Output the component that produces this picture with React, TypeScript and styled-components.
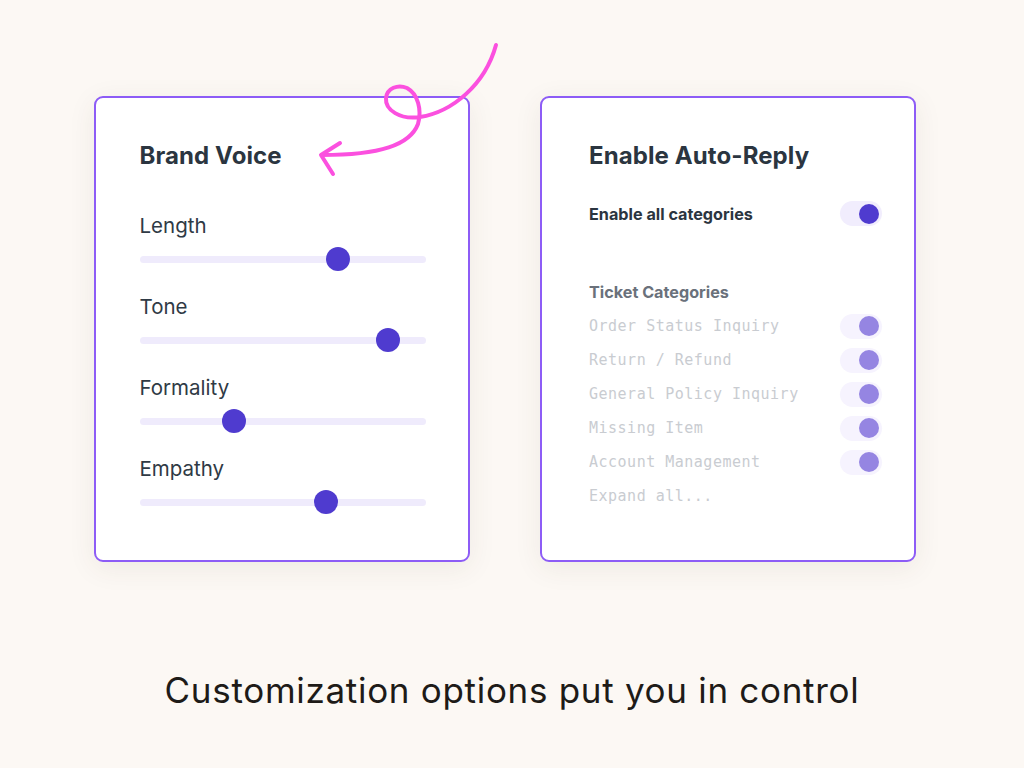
import styled, { createGlobalStyle } from 'styled-components';

const GlobalStyle = createGlobalStyle`
  html, body {
    margin: 0;
    padding: 0;
    background: #fcf8f4;
  }
  * {
    box-sizing: border-box;
  }
`;

// thumb centre, px from the left end of the track
const sliders = [
  { label: 'Length', value: 198 },
  { label: 'Tone', value: 248 },
  { label: 'Formality', value: 94 },
  { label: 'Empathy', value: 186 },
];

const categories = [
  'Order Status Inquiry',
  'Return / Refund',
  'General Policy Inquiry',
  'Missing Item',
  'Account Management',
];

const Page = styled.div`
  position: relative;
  width: 1024px;
  height: 768px;
  display: flex;
  flex-direction: column;
  font-family: Inter, 'Noto Sans', sans-serif;
`;

const CardsRow = styled.div`
  display: flex;
  gap: 70px;
  padding: 96px 0 0 94px;
`;

const Card = styled.div`
  width: 376px;
  height: 466px;
  background: #ffffff;
  border: 2.5px solid #8d5cf6;
  border-radius: 9px;
  box-shadow: 0 6px 28px rgba(80, 60, 40, 0.08);
  display: flex;
  flex-direction: column;
`;

const VoiceCard = styled(Card)`
  padding: 44px 42px 0 43.5px;
`;

const ReplyCard = styled(Card)`
  padding: 44px 32px 0 47px;
`;

const Title = styled.h2`
  margin: 0;
  font-size: 24px;
  line-height: 28px;
  font-weight: 700;
  color: #2b3540;
  letter-spacing: 0.1px;
`;

const SliderList = styled.div`
  margin-top: 44px;
  display: flex;
  flex-direction: column;
  gap: 24px;
`;

const SliderGroup = styled.div`
  display: flex;
  flex-direction: column;
  gap: 9px;
`;

const SliderLabel = styled.div`
  font-size: 20.5px;
  line-height: 24px;
  color: #2f3a45;
  font-weight: 400;
`;

const SliderRow = styled.div`
  position: relative;
  height: 24px;
  display: flex;
  align-items: center;
`;

const Track = styled.div`
  width: 100%;
  height: 7px;
  border-radius: 4px;
  background: #efebfc;
`;

const Thumb = styled.div`
  position: absolute;
  top: 0;
  width: 24px;
  height: 24px;
  margin-left: -12px;
  border-radius: 50%;
  background: #4f3bcf;
`;

const SwitchRow = styled.div<{ $height: number }>`
  display: flex;
  align-items: center;
  justify-content: space-between;
  height: ${p => p.$height}px;
`;

const MainRow = styled(SwitchRow)`
  margin-top: 31px;
`;

const MainLabel = styled.span`
  font-size: 16.2px;
  font-weight: 700;
  color: #2b3540;
`;

const SectionLabel = styled.div`
  margin-top: 54px;
  font-size: 16.2px;
  line-height: 24px;
  font-weight: 700;
  color: #6a717b;
`;

const CategoryList = styled.div`
  margin-top: 10px;
  display: flex;
  flex-direction: column;
  gap: 10px;
`;

const CategoryLabel = styled.span`
  font-family: 'DejaVu Sans Mono', 'Liberation Mono', monospace;
  font-size: 15px;
  letter-spacing: 0.5px;
  color: #c9ccd1;
`;

const Toggle = styled.div<{ $muted?: boolean }>`
  width: 42px;
  height: 25px;
  border-radius: 13px;
  background: ${p => (p.$muted ? '#f6f3fe' : '#f1edfd')};
  display: flex;
  align-items: center;
  justify-content: flex-end;
  padding-right: 3px;
`;

const ToggleKnob = styled.div<{ $muted?: boolean }>`
  width: 20px;
  height: 20px;
  border-radius: 50%;
  background: ${p => (p.$muted ? '#9585e2' : '#4f3bcf')};
`;

const Caption = styled.div`
  margin-top: 106px;
  text-align: center;
  font-size: 35px;
  line-height: 44px;
  color: #1e1b18;
  font-weight: 400;
  letter-spacing: 0.7px;
`;

const Doodle = styled.svg`
  position: absolute;
  left: 0;
  top: 0;
  pointer-events: none;
`;

const App = () => {
  return (
    <>
      <GlobalStyle />
      <Page>
        <CardsRow>
          <VoiceCard>
            <Title>Brand Voice</Title>
            <SliderList>
              {sliders.map(s => (
                <SliderGroup key={s.label}>
                  <SliderLabel>{s.label}</SliderLabel>
                  <SliderRow>
                    <Track />
                    <Thumb style={{ left: s.value }} />
                  </SliderRow>
                </SliderGroup>
              ))}
            </SliderList>
          </VoiceCard>
          <ReplyCard>
            <Title>Enable Auto-Reply</Title>
            <MainRow $height={25}>
              <MainLabel>Enable all categories</MainLabel>
              <Toggle>
                <ToggleKnob />
              </Toggle>
            </MainRow>
            <SectionLabel>Ticket Categories</SectionLabel>
            <CategoryList>
              {categories.map(c => (
                <SwitchRow key={c} $height={24}>
                  <CategoryLabel>{c}</CategoryLabel>
                  <Toggle $muted>
                    <ToggleKnob $muted />
                  </Toggle>
                </SwitchRow>
              ))}
              <SwitchRow $height={24}>
                <CategoryLabel>Expand all...</CategoryLabel>
              </SwitchRow>
            </CategoryList>
          </ReplyCard>
        </CardsRow>
        <Caption>Customization options put you in control</Caption>
        <Doodle width="1024" height="768" viewBox="0 0 1024 768">
          <path
            d="M496 45 C 485 85, 452 112, 420 117 C 400 120, 385 110, 386 98 C 387 88, 398 84, 407 88 C 418 94, 422 110, 418 124 C 410 145, 380 155, 322 155"
            fill="none"
            stroke="#fb50df"
            strokeWidth="4"
            strokeLinecap="round"
            strokeLinejoin="round"
          />
          <path
            d="M340 143 L321 155 L333 174"
            fill="none"
            stroke="#fb50df"
            strokeWidth="4"
            strokeLinecap="round"
            strokeLinejoin="round"
          />
        </Doodle>
      </Page>
    </>
  );
};

export default App;
